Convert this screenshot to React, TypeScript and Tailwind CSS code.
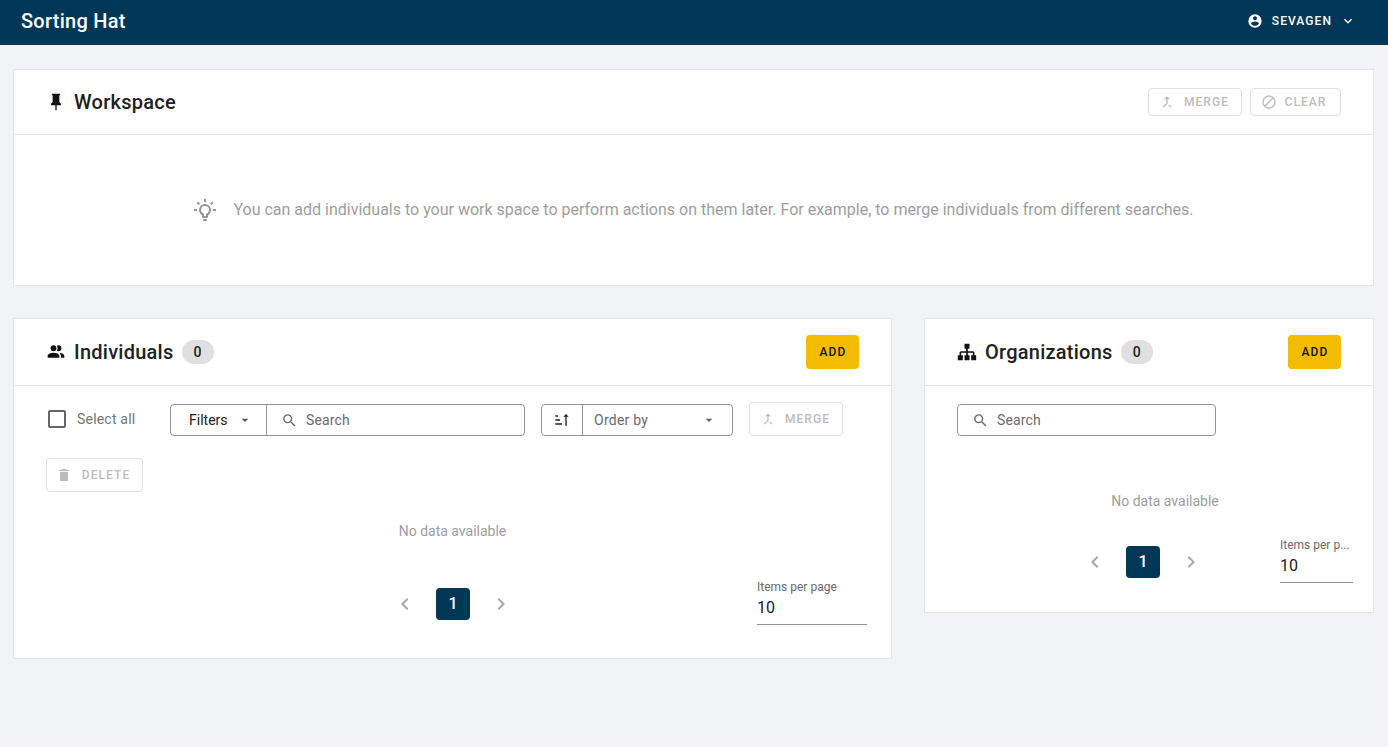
const P = {
  pin: "M16,12V4H17V2H7V4H8V12L6,14V16H11.2V22H12.8V16H18V14L16,12Z",
  merge: "M17 20.41L18.41 19 15 15.59 13.59 17 17 20.41zM7.5 8H11v5.59L5.59 19 7 20.41l6-6V8h3.5L12 3.5 7.5 8z",
  cancel: "M12,2A10,10 0 0,1 22,12A10,10 0 0,1 12,22A10,10 0 0,1 2,12A10,10 0 0,1 12,2M12,4A8,8 0 0,0 4,12C4,13.85 4.63,15.55 5.68,16.91L16.91,5.68C15.55,4.63 13.85,4 12,4M12,20A8,8 0 0,0 20,12C20,10.15 19.37,8.45 18.32,7.09L7.09,18.32C8.45,19.37 10.15,20 12,20Z",
  account: "M12,19.2C9.5,19.2 7.29,17.92 6,16C6.03,14 10,12.9 12,12.9C14,12.9 17.97,14 18,16C16.71,17.92 14.5,19.2 12,19.2M12,5A3,3 0 0,1 15,8A3,3 0 0,1 12,11A3,3 0 0,1 9,8A3,3 0 0,1 12,5M12,2A10,10 0 0,0 2,12A10,10 0 0,0 12,22A10,10 0 0,0 22,12A10,10 0 0,0 12,2Z",
  chevDown: "M7.41,8.58L12,13.17L16.59,8.58L18,10L12,16L6,10L7.41,8.58Z",
  bulb: "M20,11H23V13H20V11M1,11H4V13H1V11M13,1V4H11V1H13M4.92,3.5L7.05,5.64L5.63,7.05L3.5,4.93L4.92,3.5M16.95,5.63L19.07,3.5L20.5,4.93L18.36,7.05L16.95,5.63M12,6A6,6 0 0,1 18,12C18,14.22 16.79,16.16 15,17.2V19A1,1 0 0,1 14,20H10A1,1 0 0,1 9,19V17.2C7.21,16.16 6,14.22 6,12A6,6 0 0,1 12,6M14,21V22A1,1 0 0,1 13,23H11A1,1 0 0,1 10,22V21H14M11,18H13V15.87C14.73,15.43 16,13.86 16,12A4,4 0 0,0 12,8A4,4 0 0,0 8,12C8,13.86 9.27,15.43 11,15.87V18Z",
  people: "M16 17V19H2V17S2 13 9 13 16 17 16 17M12.5 7.5A3.5 3.5 0 1 0 9 11A3.5 3.5 0 0 0 12.5 7.5M15.94 13A5.32 5.32 0 0 1 18 17V19H22V17S22 13.37 15.94 13M15 4A3.39 3.39 0 0 0 13.07 4.59A5 5 0 0 1 13.07 10.41A3.39 3.39 0 0 0 15 11A3.5 3.5 0 0 0 15 4Z",
  sitemap: "M9,2V8H11V11H5C3.89,11 3,11.89 3,13V16H1V22H7V16H5V13H11V16H9V22H15V16H13V13H19V16H17V22H23V16H21V13C21,11.89 20.11,11 19,11H13V8H15V2H9Z",
  search: "M9.5,3A6.5,6.5 0 0,1 16,9.5C16,11.11 15.41,12.59 14.44,13.73L14.71,14H15.5L20.5,19L19,20.5L14,15.5V14.71L13.73,14.44C12.59,15.41 11.11,16 9.5,16A6.5,6.5 0 0,1 3,9.5A6.5,6.5 0 0,1 9.5,3M9.5,5C7,5 5,7 5,9.5C5,12 7,14 9.5,14C12,14 14,12 14,9.5C14,7 12,5 9.5,5Z",
  menuDown: "M7,10L12,15L17,10H7Z",
  trash: "M19,4H15.5L14.5,3H9.5L8.5,4H5V6H19M6,19A2,2 0 0,0 8,21H16A2,2 0 0,0 18,19V7H6V19Z",
  sort: "M19 7H22L18 3L14 7H17V21H19M2 17H12V19H2M6 5V7H2V5M2 11H9V13H2V11Z",
  left: "M15.41,16.58L10.83,12L15.41,7.41L14,6L8,12L14,18L15.41,16.58Z",
  right: "M8.59,16.58L13.17,12L8.59,7.41L10,6L16,12L10,18L8.59,16.58Z",
  box: "M19,3H5C3.89,3 3,3.89 3,5V19A2,2 0 0,0 5,21H19A2,2 0 0,0 21,19V5C21,3.89 20.1,3 19,3M19,5V19H5V5H19Z",
};

function Icon({ d, className }: { d: string; className: string }) {
  return (
    <svg viewBox="0 0 24 24" fill="currentColor" className={className}>
      <path d={d} />
    </svg>
  );
}

function Disabled({ icon, label, iconSize, className }: { icon: string; label: string; iconSize: string; className: string }) {
  return (
    <div className={"flex items-center justify-center rounded-[4px] border border-[#e0e0e0] text-[12px] font-[480] tracking-[1.07px] text-[#bdbdbd] bg-white " + className}>
      <Icon d={icon} className={iconSize} />
      <span>{label}</span>
    </div>
  );
}

function CardTitle({ icon, title, count, action }: { icon: string; title: string; count?: number; action: React.ReactNode }) {
  return (
    <div className="flex h-[67px] items-center justify-between border-b border-[#e5e5e5] pl-[32px] pr-[32px]">
      <div className="flex items-center">
        <Icon d={icon} className="mr-[8px] h-[20px] w-[20px] text-[#111]" />
        <h2 className="text-[20px] font-[480] leading-[32px] tracking-[0.25px] text-[#212121]">{title}</h2>
        {count !== undefined && (
          <span className="ml-[8px] flex h-[24px] w-[32px] items-center justify-center rounded-full bg-[#e0e0e0] text-[14px] font-[480] text-[#212121]">
            {count}
          </span>
        )}
      </div>
      {action}
    </div>
  );
}

function AddButton() {
  return (
    <div className="flex h-[34px] w-[53px] items-center justify-center rounded-[4px] bg-[#f4bc00] pl-[1px] text-[12px] font-[500] tracking-[1.2px] text-[#111]">
      ADD
    </div>
  );
}

function Pager() {
  return (
    <div className="flex items-center">
      <Icon d={P.left} className="h-[24px] w-[24px] text-[#a8a8a8]" />
      <div className="mx-[19px] flex h-[32px] w-[34px] items-center justify-center rounded-[4px] bg-[#003756] text-[16px] font-[480] text-white">
        1
      </div>
      <Icon d={P.right} className="h-[24px] w-[24px] text-[#a8a8a8]" />
    </div>
  );
}

function PerPage({ label, width }: { label: string; width: string }) {
  return (
    <div className={"border-b border-[#949494] " + width}>
      <div className="text-[12px] leading-[14px] text-[#6b6b6b] pt-px">{label}</div>
      <div className="mt-[2px] h-[28px] text-[16px] leading-[24px] text-[#212121]">10</div>
    </div>
  );
}

export default function App() {
  return (
    <div className="min-h-[747px] bg-[#f2f3f5] font-['Roboto',sans-serif]">
      <header className="flex h-[45px] items-center justify-between bg-[#003756] pl-[21px] pr-[32px] text-white">
        <div className="pb-[3px] text-[20px] font-[480] leading-[42px] tracking-[0.25px]">Sorting Hat</div>
        <div className="flex items-center pb-[3px]">
          <Icon d={P.account} className="h-[16px] w-[16px]" />
          <span className="ml-[9px] text-[12px] font-[480] tracking-[1.07px]">SEVAGEN</span>
          <Icon d={P.chevDown} className="ml-[8px] h-[16px] w-[16px]" />
        </div>
      </header>

      <main className="pl-[13px] pr-[14px] pt-[24px]">
        <section className="border border-[#e5e5e5] bg-white">
          <div className="flex h-[65px] items-center justify-between border-b border-[#e5e5e5] pl-[32px] pr-[32px]">
            <div className="flex items-center">
              <Icon d={P.pin} className="mr-[8px] h-[20px] w-[20px] text-[#111]" />
              <h2 className="text-[20px] font-[480] tracking-[0.25px] text-[#212121]">Workspace</h2>
            </div>
            <div className="flex gap-[8px]">
              <Disabled icon={P.merge} label="MERGE" iconSize="h-[16px] w-[16px] mr-[9px]" className="h-[28px] w-[94px] pr-[2px]" />
              <Disabled icon={P.cancel} label="CLEAR" iconSize="h-[16px] w-[16px] mr-[8px]" className="h-[28px] w-[91px] pr-[4px]" />
            </div>
          </div>
          <div className="flex h-[150px] items-center justify-center text-[16px] text-[#9e9e9e]">
            <Icon d={P.bulb} className="mr-[16px] h-[24px] w-[24px] text-[#949494]" />
            <span>You can add individuals to your work space to perform actions on them later. For example, to merge individuals from different searches.</span>
          </div>
        </section>

        <div className="mt-[32px] flex items-start gap-[32px]">
          <section className="w-[879px] border border-[#e5e5e5] bg-white">
            <CardTitle icon={P.people} title="Individuals" count={0} action={<AddButton />} />
            <div className="flex flex-wrap items-center pl-[32px] pr-[32px] pt-[16px]">
              <div className="flex h-[34px] w-[124px] items-center">
                <Icon d={P.box} className="-ml-[1px] h-[24px] w-[24px] text-[#666]" />
                <span className="ml-[8px] text-[14px] tracking-[0.2px] text-[#757575]">Select all</span>
              </div>
              <div className="mt-[2px] flex h-[32px] w-[355px] items-stretch rounded-[4px] border border-[#949494] text-[14px]">
                <div className="flex w-[96px] items-center border-r border-[#949494] pl-[18px] text-[#212121]">
                  Filters
                  <Icon d={P.menuDown} className="ml-[9px] h-[16px] w-[16px] text-[#555]" />
                </div>
                <div className="flex flex-1 items-center pl-[14px] tracking-[0.15px] text-[#6b6b6b]">
                  <Icon d={P.search} className="mr-[8px] h-[17px] w-[17px]" />
                  Search
                </div>
              </div>
              <div className="ml-[16px] mt-[2px] flex h-[32px] w-[192px] items-stretch rounded-[4px] border border-[#949494] text-[14px]">
                <div className="flex w-[41px] items-center justify-center border-r border-[#949494] text-[#212121]">
                  <Icon d={P.sort} className="h-[16px] w-[16px]" />
                </div>
                <div className="flex flex-1 items-center justify-between pl-[11px] pr-[15px] tracking-[0.25px] text-[#6b6b6b]">
                  Order by
                  <Icon d={P.menuDown} className="h-[16px] w-[16px] text-[#666]" />
                </div>
              </div>
              <Disabled icon={P.merge} label="MERGE" iconSize="h-[16px] w-[16px] mr-[9px]" className="ml-[16px] h-[34px] w-[94px] pr-[2px]" />
              <Disabled icon={P.trash} label="DELETE" iconSize="h-[16px] w-[16px] mr-[10px]" className="mt-[22px] h-[34px] w-[97px] pr-[3px]" />
            </div>
            <div className="mt-[29px] text-center text-[14px] leading-[20px] text-[#9e9e9e]">No data available</div>
            <div className="relative mt-[47px] flex h-[70px] justify-center pl-[1px]">
              <div className="h-[32px]">
                <Pager />
              </div>
              <div className="absolute right-[24px] top-[-9px]">
                <PerPage label="Items per page" width="w-[110px]" />
              </div>
            </div>
          </section>

          <section className="w-[450px] border border-[#e5e5e5] bg-white">
            <CardTitle icon={P.sitemap} title="Organizations" count={0} action={<AddButton />} />
            <div className="pl-[32px] pt-[18px]">
              <div className="flex h-[32px] w-[259px] items-center rounded-[4px] border border-[#949494] pl-[14px] text-[14px] tracking-[0.15px] text-[#6b6b6b]">
                <Icon d={P.search} className="mr-[8px] h-[17px] w-[17px]" />
                Search
              </div>
            </div>
            <div className="mt-[55px] text-center text-[14px] leading-[20px] text-[#9e9e9e] pl-[32px]">No data available</div>
            <div className="relative mt-[35px] flex h-[66px] justify-center pr-[12px]">
              <div className="h-[32px]">
                <Pager />
              </div>
              <div className="absolute right-[20px] top-[-9px]">
                <PerPage label="Items per p..." width="w-[73px]" />
              </div>
            </div>
          </section>
        </div>
      </main>
    </div>
  );
}
